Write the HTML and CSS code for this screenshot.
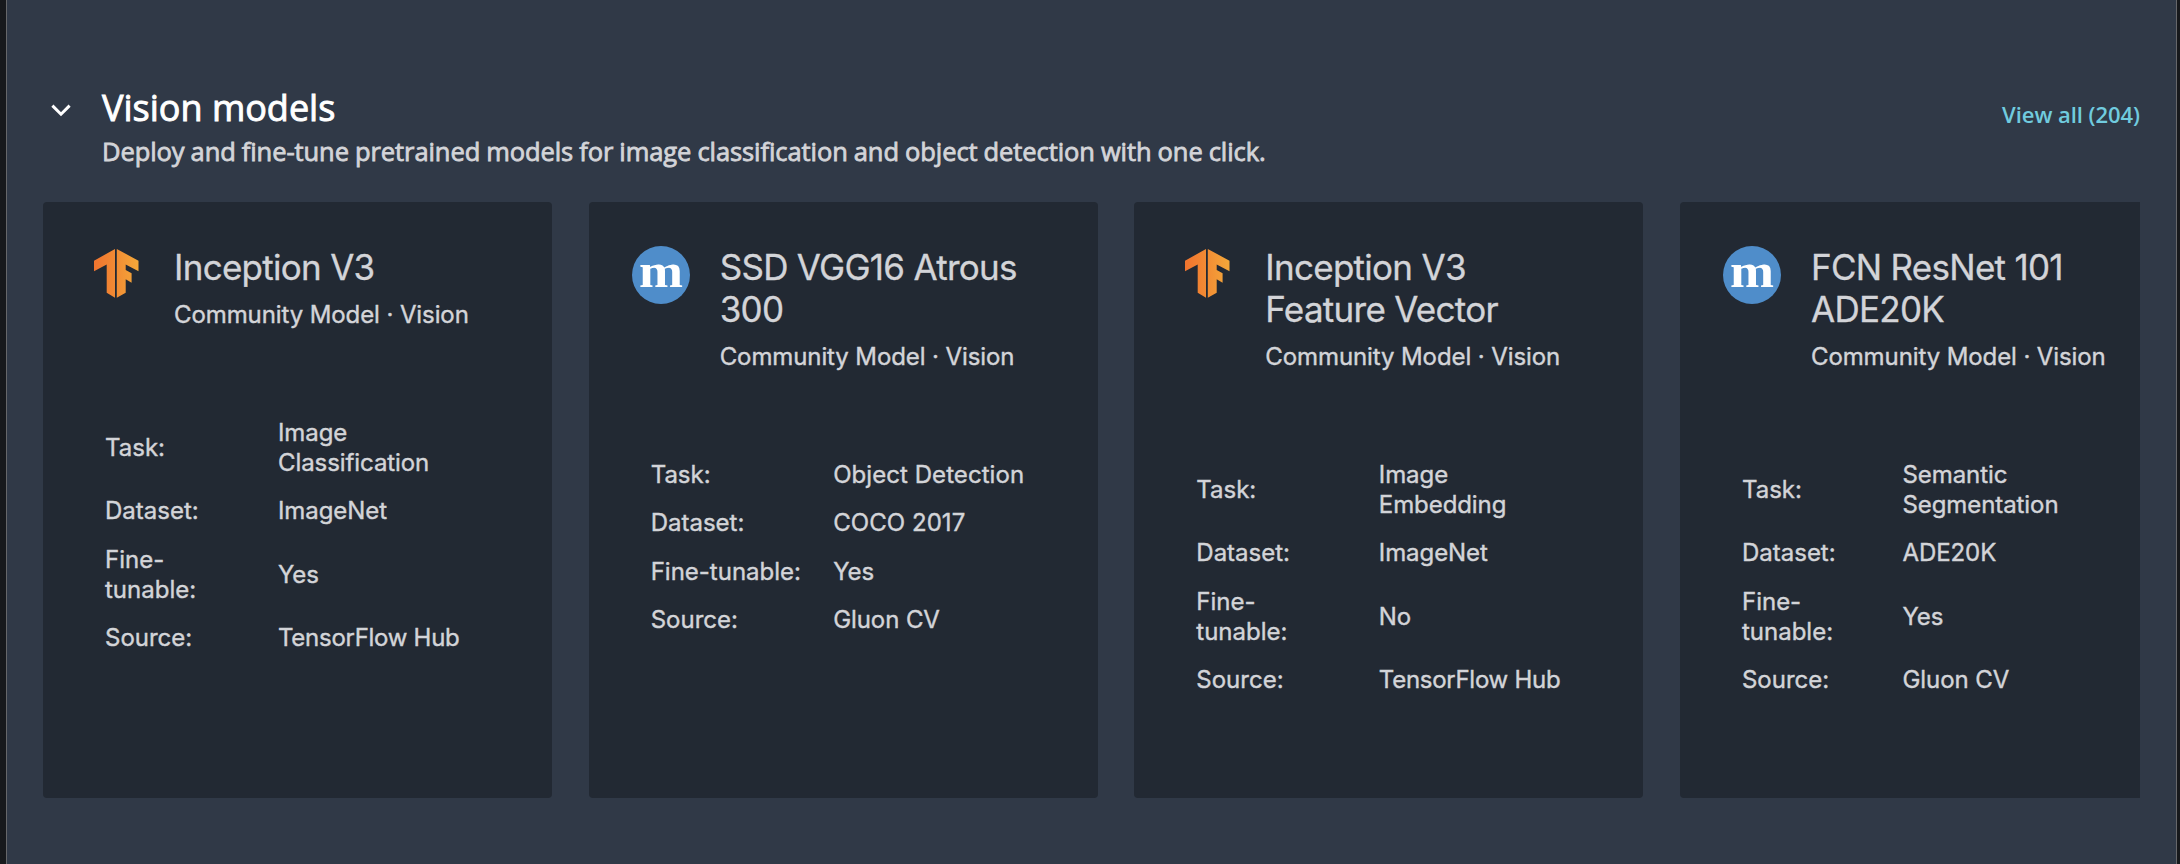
FILE: index.html
```html
<!DOCTYPE html>
<html lang="en">
<head>
<meta charset="utf-8">
<title>Vision models</title>
<link rel="stylesheet" href="styles.css">
</head>
<body>
<svg class="defs" aria-hidden="true">
  <defs>
    <linearGradient id="tf-fill" x1="0" y1="0" x2="45" y2="0" gradientUnits="userSpaceOnUse">
      <stop offset="0" stop-color="#f1742f"/>
      <stop offset="0.4" stop-color="#f18733"/>
      <stop offset="1" stop-color="#f4a93a"/>
    </linearGradient>
    <symbol id="tf" viewBox="0 0 45 49">
      <path fill="url(#tf-fill)" d="M21 0 0 11.7v10.6l12.7-6.8v28.3L21 48.7zM22.8 0v48.7l8.9-4.9V30.3l5.9 3.4v-9.4L31.7 21v-5.5l12.8 6.8V11.7z"/>
    </symbol>
  </defs>
</svg>
<main class="panel">
  <header class="head">
    <svg class="chevron" viewBox="0 0 20 13"><path d="M1.4 1.6 10 10.2l8.6-8.6" fill="none" stroke="#fff" stroke-width="3"/></svg>
    <div class="heading">
      <h1 class="title">Vision models</h1>
      <p class="subtitle">Deploy and fine-tune pretrained models for image classification and object detection with one click.</p>
    </div>
    <a class="view-all">View all (204)</a>
  </header>
  <section class="cards">
    <article class="card">
      <div class="card-head">
        <div class="logo"><svg class="tf"><use href="#tf"/></svg></div>
        <div><h2 class="name">Inception V3</h2><p class="kind">Community Model · Vision</p></div>
      </div>
      <dl class="facts facts-a">
        <dt>Task:</dt><dd>Image<br>Classification</dd>
        <dt>Dataset:</dt><dd>ImageNet</dd>
        <dt>Fine-<br>tunable:</dt><dd>Yes</dd>
        <dt>Source:</dt><dd class="tight">TensorFlow Hub</dd>
      </dl>
    </article>
    <article class="card">
      <div class="card-head">
        <div class="logo"><svg class="mx" viewBox="0 0 58 58"><circle cx="29" cy="29" r="29"/><text x="7" y="41" textLength="44" lengthAdjust="spacingAndGlyphs">m</text></svg></div>
        <div><h2 class="name">SSD VGG16 Atrous<br>300</h2><p class="kind">Community Model · Vision</p></div>
      </div>
      <dl class="facts facts-b">
        <dt>Task:</dt><dd class="loose">Object Detection</dd>
        <dt>Dataset:</dt><dd class="loose">COCO 2017</dd>
        <dt>Fine-tunable:</dt><dd>Yes</dd>
        <dt>Source:</dt><dd>Gluon CV</dd>
      </dl>
    </article>
    <article class="card">
      <div class="card-head">
        <div class="logo"><svg class="tf"><use href="#tf"/></svg></div>
        <div><h2 class="name">Inception V3<br>Feature Vector</h2><p class="kind">Community Model · Vision</p></div>
      </div>
      <dl class="facts facts-b">
        <dt>Task:</dt><dd>Image<br>Embedding</dd>
        <dt>Dataset:</dt><dd>ImageNet</dd>
        <dt>Fine-<br>tunable:</dt><dd>No</dd>
        <dt>Source:</dt><dd class="tight">TensorFlow Hub</dd>
      </dl>
    </article>
    <article class="card">
      <div class="card-head">
        <div class="logo"><svg class="mx" viewBox="0 0 58 58"><circle cx="29" cy="29" r="29"/><text x="7" y="41" textLength="44" lengthAdjust="spacingAndGlyphs">m</text></svg></div>
        <div><h2 class="name">FCN ResNet 101<br>ADE20K</h2><p class="kind">Community Model · Vision</p></div>
      </div>
      <dl class="facts facts-c">
        <dt>Task:</dt><dd>Semantic<br>Segmentation</dd>
        <dt>Dataset:</dt><dd>ADE20K</dd>
        <dt>Fine-<br>tunable:</dt><dd>Yes</dd>
        <dt>Source:</dt><dd>Gluon CV</dd>
      </dl>
    </article>
  </section>
</main>
</body>
</html>
```
FILE: styles.css
```css
* { box-sizing: border-box; margin: 0; padding: 0; }
body {
  height: 864px;
  padding: 0 3px 0 6px;
  overflow: hidden;
  background: #17191c;
  font-family: Inter, "Liberation Sans", sans-serif;
  color: #d3d4d8;
}
.defs { position: absolute; width: 0; height: 0; }
.panel {
  height: 864px;
  padding: 82px 36px 0;
  background: #303947;
  border: solid #66676a;
  border-width: 0 1px;
}
.head {
  display: flex;
  align-items: flex-start;
  height: 120px;
  font-family: "Open Sans", "Noto Sans", sans-serif;
}
.chevron { width: 20px; height: 13px; margin: 22px 31px 0 8px; }
.heading { flex: 1; }
.title { font-size: 36px; font-weight: 400; line-height: 52px; color: #fff; -webkit-text-stroke: 0.9px; }
.subtitle {
  margin-top: -1px;
  font-size: 25.5px;
  font-weight: 400;
  line-height: 36px;
  letter-spacing: -0.08px;
  word-spacing: -0.5px;
  white-space: nowrap;
  -webkit-text-stroke: 0.8px;
}
.view-all {
  margin-top: 17px;
  font-size: 22px;
  font-weight: 600;
  line-height: 30px;
  letter-spacing: -0.05px;
  color: #70cbdf;
}
.cards { display: flex; gap: 36.67px; overflow: hidden; }
.card {
  flex: 0 0 509px;
  height: 596px;
  padding: 44px 0 0 43px;
  background: #222933;
  border-radius: 4px;
}
.card-head { display: flex; gap: 30px; }
.logo { display: flex; justify-content: center; width: 58px; }
.tf { width: 45px; height: 49px; margin: 3px 0 0 2px; }
.mx { width: 58px; height: 58px; overflow: visible; }
.mx circle { fill: #4f8dca; }
.mx text { fill: #fff; font: bold 48px "Liberation Serif", serif; }
.name {
  font-size: 35px;
  font-weight: 400;
  line-height: 42px;
  letter-spacing: -0.72px;
  white-space: nowrap;
  -webkit-text-stroke: 0.3px;
}
.kind {
  margin-top: 12px;
  font-size: 24px;
  line-height: 30px;
  letter-spacing: -0.1px;
  white-space: nowrap;
  -webkit-text-stroke: 0.4px;
}
.facts {
  display: grid;
  row-gap: 18.33px;
  align-items: center;
  margin: 88px 0 0 19px;
  font-size: 24px;
  line-height: 30px;
  letter-spacing: -0.08px;
  -webkit-text-stroke: 0.4px;
}
.facts-a { grid-template-columns: 173px 1fr; }
.facts-b { grid-template-columns: 182.5px 1fr; }
.facts-c { grid-template-columns: 160.5px 1fr; }
.facts dt { letter-spacing: 0; }
.tight { letter-spacing: -0.27px; }
.loose { letter-spacing: 0.06px; }
```
